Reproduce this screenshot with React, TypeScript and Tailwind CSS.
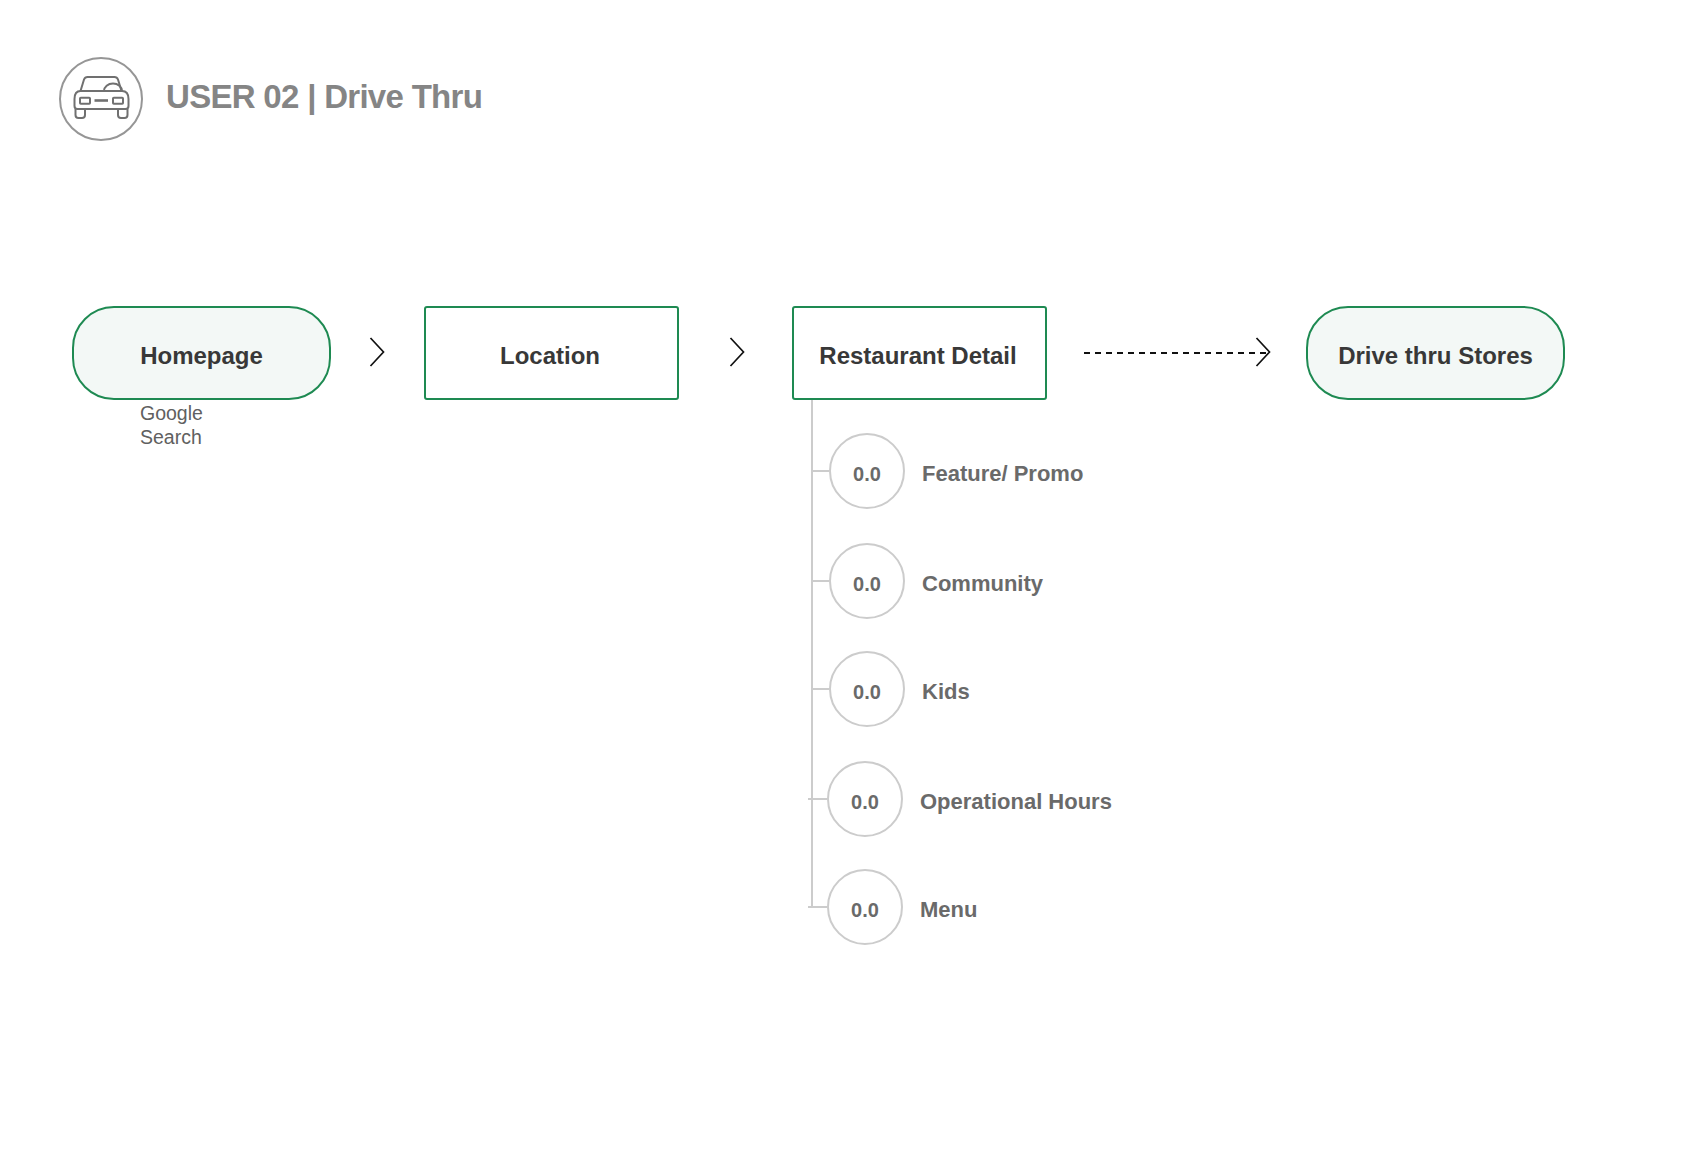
import React from "react";

// rows hanging off the Restaurant Detail box
const sections = [
  { label: "Feature/ Promo", row: "mt-[33px]", tick: "w-[16px]" },
  { label: "Community", row: "mt-[34px]", tick: "w-[16px]" },
  { label: "Kids", row: "mt-[32px]", tick: "w-[16px]" },
  { label: "Operational Hours", row: "mt-[34px]", tick: "ml-[-5px] w-[19px]" },
  { label: "Menu", row: "mt-[32px]", tick: "ml-[-5px] w-[19px]" },
];

const CarIcon = () => (
  <svg width="60" height="50" viewBox="0 0 60 50" fill="none" stroke="#707070" strokeWidth="2" strokeLinejoin="round">
    <path d="M9.5 18 L13 6.5 Q14 4 16.5 4 H43.5 Q46 4 47 6.5 L50.5 18" />
    <path d="M3.5 26 Q3.5 18 9.5 18 H51 Q57.5 18 57.5 26 V33 Q57.5 36 54.5 36 H6.5 Q3.5 36 3.5 33 Z" />
    <path d="M33 18 A9 7.5 0 0 1 51 18" />
    <rect x="9" y="24.7" width="10" height="6" rx="0.8" />
    <rect x="42" y="24.7" width="10" height="6" rx="0.8" />
    <path d="M23.5 27.5 H37" strokeWidth="2.6" />
    <path d="M4.5 36 V42 Q4.5 45 7.5 45 H11 Q14 45 14 42 V36" />
    <path d="M47 36 V42 Q47 45 50 45 H53.5 Q56.5 45 56.5 42 V36" />
  </svg>
);

const Chevron = () => (
  <svg width="16" height="30" viewBox="0 0 16 30" fill="none" stroke="#111111" strokeWidth="1.7">
    <path d="M1.5 1 L14.5 15 L1.5 29" />
  </svg>
);

const Node = ({ label, pill }: { label: string; pill?: boolean }) => (
  <div
    className={
      pill
        ? "flex h-[94px] w-[259px] shrink-0 items-center justify-center rounded-[42px] border-2 border-[#1e8a52] bg-[#f3f8f6] pt-[5px] text-[24px] font-bold text-[#383838]"
        : "flex h-[94px] w-[255px] shrink-0 items-center justify-center rounded-[3px] border-2 border-[#1e8a52] bg-white pr-[3px] pt-[5px] text-[24px] font-bold text-[#383838]"
    }
  >
    {label}
  </div>
);

export default function App() {
  return (
    <div className="min-h-screen w-[1684px] bg-white pl-[59px] pt-[57px] font-['Liberation_Sans',sans-serif]">
      <div className="flex h-[84px] items-center">
        <div className="flex h-[84px] w-[84px] items-center justify-center rounded-full border-2 border-[#969696] pb-[2px]">
          <CarIcon />
        </div>
        <h1 className="mb-[5px] ml-[23px] text-[33px] font-bold tracking-[-0.7px] text-[#858585]">USER 02 | Drive Thru</h1>
      </div>

      <div className="ml-[13px] mt-[165px] flex items-start">
        <div className="w-[259px] shrink-0">
          <Node label="Homepage" pill />
          <div className="ml-[68px] mt-[1px] text-[19.5px] leading-[24px] text-[#606060]">
            Google
            <br />
            Search
          </div>
        </div>

        <div className="ml-[38px] flex h-[92px] w-[55px] shrink-0 items-center">
          <Chevron />
        </div>

        <Node label="Location" />

        <div className="ml-[50px] flex h-[92px] w-[63px] shrink-0 items-center">
          <Chevron />
        </div>

        <div className="w-[255px] shrink-0">
          <Node label="Restaurant Detail" />
          <div className="ml-[19px] flex items-start">
            <div className="h-[508px] w-[2px] shrink-0 bg-[#cccccc]" />
            <div className="flex w-[400px] shrink-0 flex-col">
              {sections.map((s) => (
                <div key={s.label} className={`${s.row} flex items-center`}>
                  <div className={`${s.tick} h-[2px] shrink-0 bg-[#cccccc]`} />
                  <div className="flex h-[76px] w-[76px] shrink-0 items-center justify-center rounded-full border-2 border-[#cccccc] bg-white pt-[5px] text-[20px] font-bold text-[#6a6a6a]">
                    0.0
                  </div>
                  <div className="ml-[17px] whitespace-nowrap pt-[5px] text-[22px] font-bold text-[#6a6a6a]">{s.label}</div>
                </div>
              ))}
            </div>
          </div>
        </div>

        <div className="ml-[37px] flex h-[94px] shrink-0 items-center">
          <div className="relative flex w-[187px] items-center">
            <svg width="187" height="2" viewBox="0 0 187 2">
              <line x1="0" y1="1" x2="187" y2="1" stroke="#111111" strokeWidth="2" strokeDasharray="6 5" />
            </svg>
            <div className="absolute right-0 top-[-15px]">
              <Chevron />
            </div>
          </div>
        </div>

        <div className="ml-[35px] shrink-0">
          <Node label="Drive thru Stores" pill />
        </div>
      </div>
    </div>
  );
}
